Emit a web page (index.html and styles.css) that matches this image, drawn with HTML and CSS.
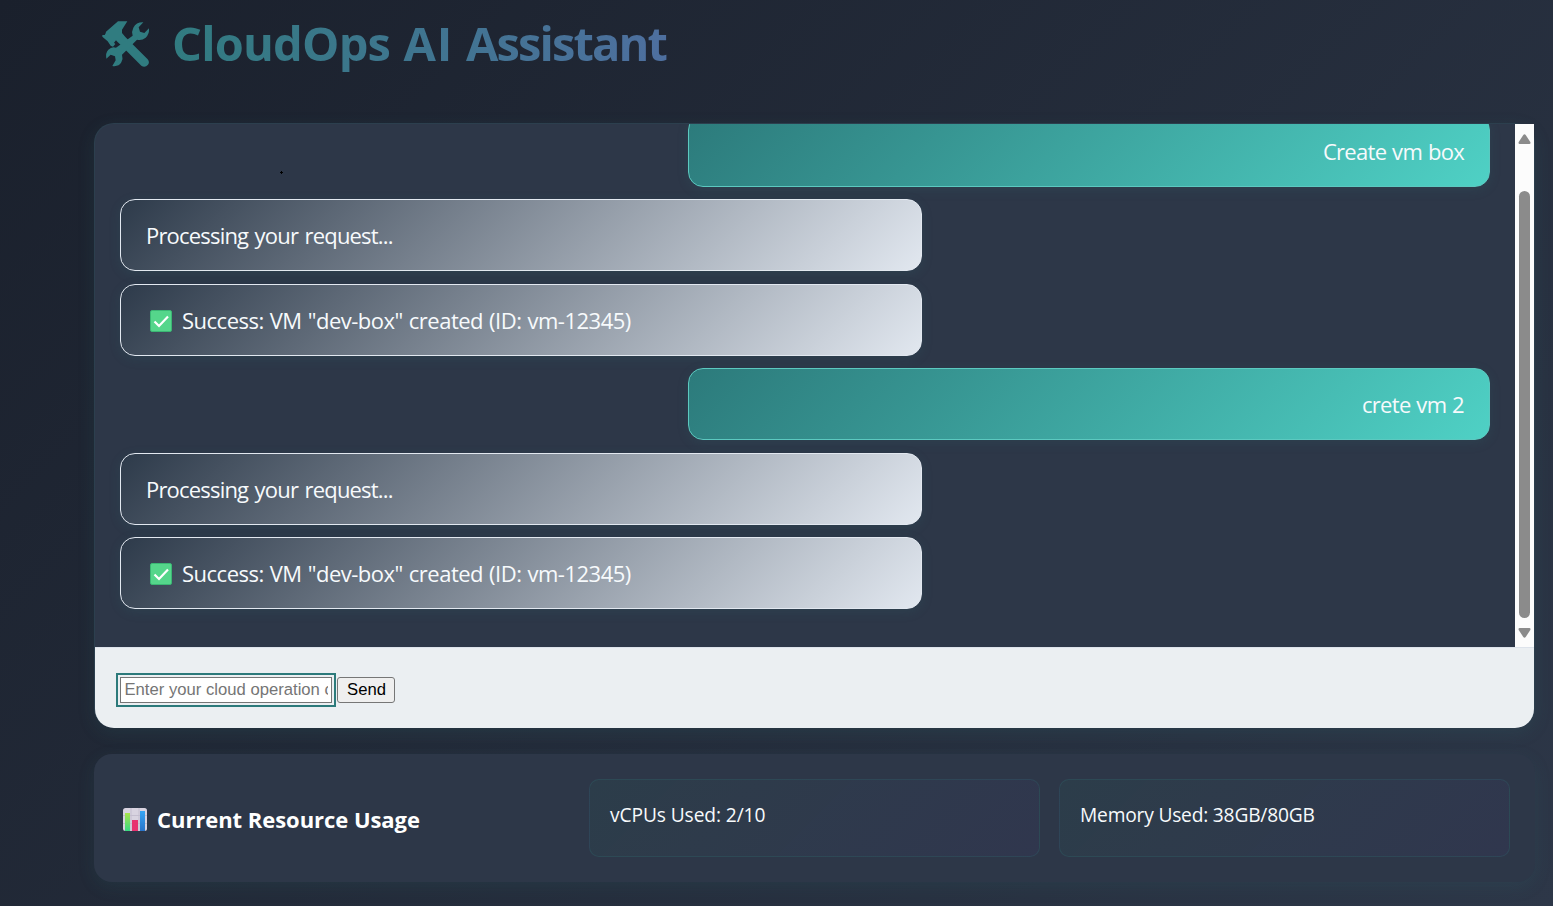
FILE: index.html
```html
<!DOCTYPE html>
<html lang="en">
<head>
<meta charset="utf-8">
<title>CloudOps AI Assistant</title>
<link rel="stylesheet" href="styles.css">
</head>
<body>
<div class="page">
  <header class="header">
    <svg class="tools" viewBox="0 0 144 138" aria-hidden="true">
      <path d="M48 1H76L60 26V36L70 48L137 115Q144 123 138 131Q129 141 118 134L62 78L54 70L46 62L42 58L36 65L40 69L33 77L26 74L17 61L1 47V42H8L11 37L12 32Z"/>
      <path d="M124 4Q103 3 94 20Q88 31 92 44L42 80Q30 75 19 86Q10 95 13 113L26 101L39 106L41 118L31 135Q50 138 58 124Q64 113 60 101L105 56Q119 60 131 50Q143 39 141 22L127 36L114 32L110 19Z"/>
    </svg>
    <h1 class="title"><span class="w1">CloudOps</span> <span class="w2">AI</span> <span class="w3">Assistant</span></h1>
  </header>

  <main class="chat">
    <div class="viewport">
      <div class="messages">
        <div class="bubble user"><span class="t1">Create vm box</span></div>
        <div class="bubble ai"><span class="t2">Processing your request...</span></div>
        <div class="bubble ai"><svg class="check" viewBox="0 0 22 22"><rect x=".5" y=".5" width="21" height="21" rx="1.5" fill="#55d68b" stroke="#3bb774"/><path d="M4.5 11.5L9 16L18 6.5" fill="none" stroke="#fff" stroke-width="2.2"/></svg><span class="t3">Success: VM "dev-box" created (ID: vm-12345)</span></div>
        <div class="bubble user"><span class="t1">crete vm 2</span></div>
        <div class="bubble ai"><span class="t2">Processing your request...</span></div>
        <div class="bubble ai"><svg class="check" viewBox="0 0 22 22"><rect x=".5" y=".5" width="21" height="21" rx="1.5" fill="#55d68b" stroke="#3bb774"/><path d="M4.5 11.5L9 16L18 6.5" fill="none" stroke="#fff" stroke-width="2.2"/></svg><span class="t3">Success: VM "dev-box" created (ID: vm-12345)</span></div>
      </div>
      <div class="scrollbar">
        <svg class="arrow" viewBox="0 0 13 10"><path d="M5.3 1Q6.5-.4 7.7 1L12.3 8Q13 10 11.3 10H1.7Q0 10 .7 8Z"/></svg>
        <div class="thumb"></div>
        <svg class="arrow down" viewBox="0 0 13 10"><path d="M5.3 1Q6.5-.4 7.7 1L12.3 8Q13 10 11.3 10H1.7Q0 10 .7 8Z"/></svg>
      </div>
    </div>
    <form class="composer">
      <input class="field" type="text" placeholder="Enter your cloud operation command...">
      <button class="send" type="button">Send</button>
    </form>
    <svg class="cursor" viewBox="0 0 3 3"><path d="M1 0h1v1h1v1H2v1H1V2H0V1h1Z"/></svg>
  </main>

  <section class="usage">
    <h2 class="usage-title">
      <svg class="chart" viewBox="0 0 24 23"><defs><linearGradient id="g" x2="0" y2="1"><stop stop-color="#a9e34b"/><stop offset="1" stop-color="#38d982"/></linearGradient><linearGradient id="b" x2="0" y2="1"><stop stop-color="#36a6f5"/><stop offset="1" stop-color="#2873c9"/></linearGradient></defs><rect width="24" height="23" rx="2.5" fill="#d8d3e0"/><path d="M0 7.5H24M0 15.5H24M8 0V23M16 0V23" stroke="#c4becf" fill="none"/><path d="M2 5H7V23H2Z" fill="url(#g)"/><path d="M9 12H15V23H9Z" fill="#e8316f"/><path d="M17 3H22V23H17Z" fill="url(#b)"/></svg>
      <span class="t5">Current Resource Usage</span>
    </h2>
    <div class="stat"><span class="t6">vCPUs Used: 2/10</span></div>
    <div class="stat"><span class="t7">Memory Used: 38GB/80GB</span></div>
  </section>
</div>
</body>
</html>
```
FILE: styles.css
```css
* { box-sizing: border-box; }
body {
  margin: 0;
  height: 906px;
  overflow: hidden;
  background: linear-gradient(135deg, #1a202c 0%, #2d3748 100%);
  font-family: "Open Sans", "Noto Sans", sans-serif;
  color: #f7fafc;
}
.page { width: 1441px; margin-left: 94px; }
.header { height: 123px; display: flex; align-items: flex-start; padding: 21px 0 0 8px; }
.tools { width: 48px; height: 46px; fill: #307c80; flex: none; }
.title {
  margin: -9px 0 0 22px;
  width: 1363px;
  font-size: 47px;
  line-height: 62px;
  font-weight: 700;
  letter-spacing: -1.3px;
  white-space: nowrap;
  color: transparent;
  background: linear-gradient(90deg, #317b80, #805ad5);
  -webkit-background-clip: text;
  background-clip: text;
}
.w1 { letter-spacing: -.8px; margin-right: 2.5px; }
.w2 { letter-spacing: .7px; margin-right: 2px; }
.w3 { letter-spacing: -1.85px; }
.chat {
  position: relative;
  height: 605px;
  border: 1px solid rgba(44, 122, 123, .12);
  border-bottom: 0;
  border-radius: 20px;
  background: #2d3748;
  box-shadow: 0 5px 17px rgba(44, 122, 123, .15);
}
.viewport { display: flex; height: 523px; overflow: hidden; border-radius: 19px 0 0; }
.messages {
  flex: 1;
  display: flex;
  flex-direction: column;
  justify-content: flex-end;
  gap: 12.5px;
  padding: 0 25px 38px;
}
.bubble {
  flex: none;
  display: flex;
  align-items: center;
  width: 802px;
  height: 72px;
  padding: 2px 25px 0;
  border: 1px solid #e2e8f0;
  border-radius: 15px;
  font-size: 22px;
  line-height: 30px;
  white-space: nowrap;
  box-shadow: 0 3px 12px rgba(44, 122, 123, .15);
}
.ai { background: linear-gradient(135deg, #2d3a4a, #e2e8f0) border-box; }
.user {
  align-self: flex-end;
  justify-content: flex-end;
  border-color: #5cc9c0;
  background: linear-gradient(135deg, #2c7a7b, #4fd1c5) border-box;
}
.check { width: 22px; height: 22px; margin: 0 10px 0 4px; flex: none; }
.scrollbar {
  width: 19px;
  display: flex;
  flex-direction: column;
  align-items: center;
  padding-top: 10px;
  background: #fcfcfc;
}
.arrow { width: 13px; height: 10px; fill: #8b8b8b; flex: none; }
.down { transform: rotate(180deg); margin-top: 10px; }
.thumb { width: 11px; height: 427px; margin-top: 47px; border-radius: 6px; background: #8b8b8b; }
.composer {
  height: 81px;
  display: flex;
  align-items: flex-start;
  gap: 5px;
  padding: 29px 25px 0;
  border-top: 1px solid #dde3eb;
  border-radius: 0 0 19px 19px;
  background: #ebeff2;
}
.field, .send { height: 26px; margin: 0; border: 1px solid #767676; border-radius: 3px; font: 16.67px "Liberation Sans", sans-serif; }
.field { width: 212px; padding: 0 3.5px; border-radius: 0; background: #fff; outline: 2px solid #2c7a7b; outline-offset: 2px; }
.field::placeholder { color: #757575; }
.send { width: 58px; padding: 0 0 0 1px; background: #efefef; color: #000; }
.cursor { position: absolute; left: 185px; top: 47px; width: 3px; height: 3px; fill: #000; }
.usage {
  display: grid;
  grid-template-columns: repeat(3, 1fr);
  gap: 19px;
  height: 128px;
  margin-top: 26px;
  padding: 25px;
  border-radius: 18px;
  background: #2d3748;
  box-shadow: 0 5px 17px rgba(44, 122, 123, .13);
}
.usage-title { display: flex; align-items: center; gap: 10px; margin: 0; padding: 3px 0 0 4px; font-size: 22px; line-height: 28px; font-weight: 700; white-space: nowrap; color: #fff; }
.chart { width: 24px; height: 23px; }
.stat {
  height: 78px;
  padding: 21px 20px;
  border: 1px solid rgba(44, 122, 123, .22);
  border-radius: 10px;
  background: linear-gradient(135deg, rgba(44, 122, 100, .09), rgba(90, 60, 150, .08));
  font-size: 19.2px;
  line-height: 28px;
  white-space: nowrap;
}
.t1, .t2, .t3 { margin-top: -2px; }
.t1 { letter-spacing: -.7px; word-spacing: .8px; }
.t2 { letter-spacing: -.81px; word-spacing: 1.5px; }
.t3 { letter-spacing: -.5px; word-spacing: .8px; }
.t5 { letter-spacing: -.05px; margin-top: -2px; }
.t6 { letter-spacing: -.1px; }
.t7 { letter-spacing: -.2px; }
```
